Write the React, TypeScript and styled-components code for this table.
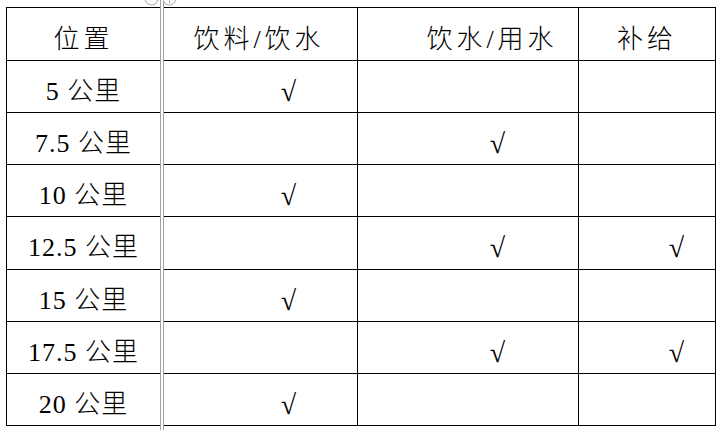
import React from "react";
import styled, { createGlobalStyle } from "styled-components";

const GlobalStyle = createGlobalStyle`
  html, body {
    margin: 0;
    padding: 0;
    background: #ffffff;
  }
  body {
    font-family: "Liberation Serif", "Noto Sans CJK SC", serif;
    color: #000;
  }
`;

const Page = styled.div`
  position: relative;
  width: 721px;
  height: 430px;
  padding: 7px 0 0 6px;
  box-sizing: border-box;
  background: #fff;
`;

const Grid = styled.div`
  display: grid;
  grid-template-columns: 153px 196px 220px 136px;
  grid-template-rows: 52px 51px 51px 51px 52px 51px 51px 51px;
  gap: 1px;
  padding: 1px;
  width: max-content;
  background: #000;
`;

const Cell = styled.div<{ $shift?: number; $head?: boolean }>`
  background: #fff;
  display: flex;
  align-items: center;
  justify-content: center;
  padding-top: ${(p) => (p.$head ? 11 : 10)}px;
  padding-left: ${(p) => p.$shift ?? 0}px;
  box-sizing: border-box;
  font-size: 26px;
  font-weight: 300;
  line-height: 1;
  letter-spacing: ${(p) => (p.$head ? 4 : 1)}px;
  white-space: nowrap;
`;

const Check = styled.span`
  font-family: "Liberation Serif", serif;
  font-size: 28px;
  font-weight: 400;
`;

const Splitter = styled.div`
  position: absolute;
  left: 160px;
  top: 0;
  width: 4px;
  height: 430px;
  box-sizing: border-box;
  border-left: 1px solid #a0a0a0;
  border-right: 1px solid #a0a0a0;
  background: #fff;
`;

const Handles = styled.svg`
  position: absolute;
  left: 143px;
  top: 0;
`;

const headers: { text: string; shift: number }[] = [
  { text: "位置", shift: 0 },
  { text: "饮料/饮水", shift: 0 },
  { text: "饮水/用水", shift: 48 },
  { text: "补给", shift: 0 },
];

const rows: { pos: string; drink: boolean; water: boolean; supply: boolean }[] = [
  { pos: "5 公里", drink: true, water: false, supply: false },
  { pos: "7.5 公里", drink: false, water: true, supply: false },
  { pos: "10 公里", drink: true, water: false, supply: false },
  { pos: "12.5 公里", drink: false, water: true, supply: true },
  { pos: "15 公里", drink: true, water: false, supply: false },
  { pos: "17.5 公里", drink: false, water: true, supply: true },
  { pos: "20 公里", drink: true, water: false, supply: false },
];

const Mark = ({ on }: { on: boolean }) => (
  <Cell $shift={on ? 60 : 0}>{on ? <Check>√</Check> : null}</Cell>
);

export default function App() {
  return (
    <>
      <GlobalStyle />
      <Page>
        <Grid>
          {headers.map((h) => (
            <Cell key={h.text} $head $shift={h.shift}>
              {h.text}
            </Cell>
          ))}
          {rows.map((r) => (
            <React.Fragment key={r.pos}>
              <Cell>{r.pos}</Cell>
              <Mark on={r.drink} />
              <Mark on={r.water} />
              <Mark on={r.supply} />
            </React.Fragment>
          ))}
        </Grid>
        <Splitter />
        <Handles width="36" height="8" viewBox="0 0 36 8">
          <circle cx="8.5" cy="-1.5" r="6.5" fill="#fff" stroke="#a8a8a8" strokeWidth="1" />
          <circle cx="26.5" cy="-1.5" r="6.5" fill="#fff" stroke="#a8a8a8" strokeWidth="1" />
          <path d="M26.5 0.5 V3" stroke="#a8a8a8" strokeWidth="1.2" />
        </Handles>
      </Page>
    </>
  );
}
